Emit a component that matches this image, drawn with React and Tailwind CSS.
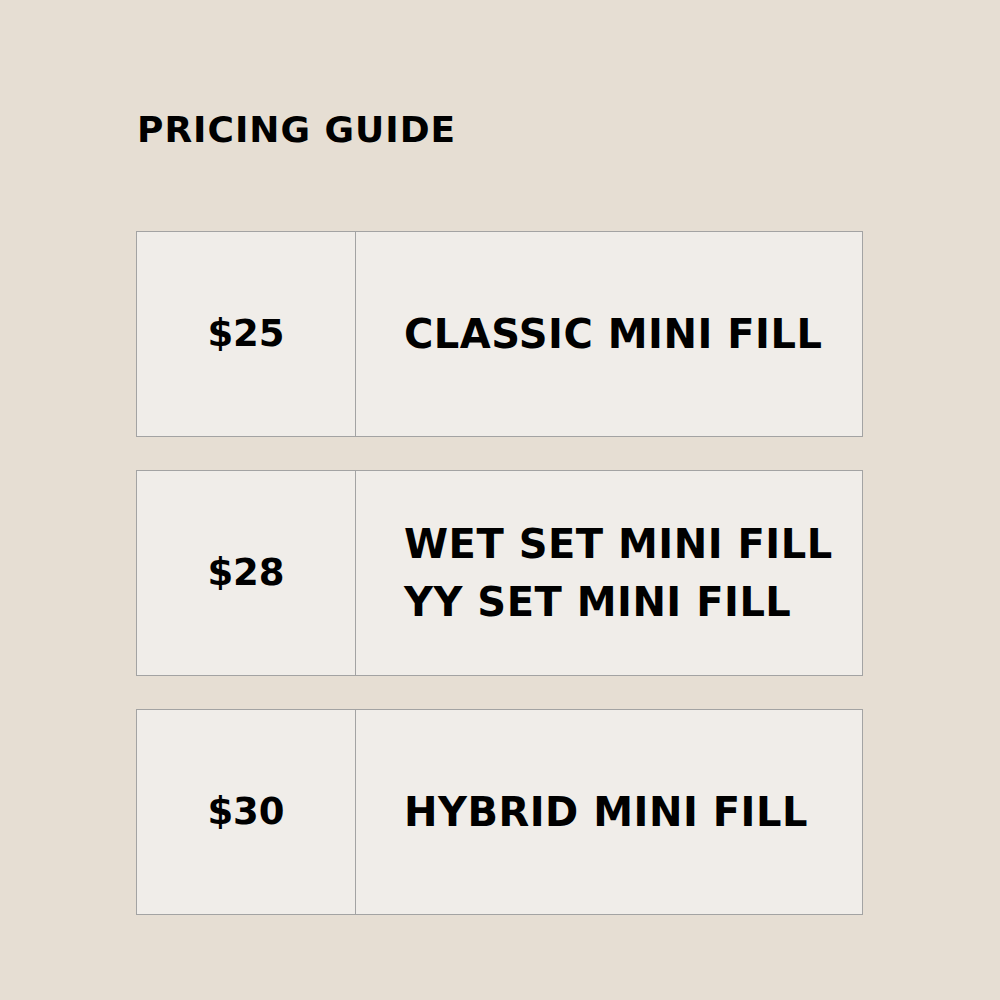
export default function App() {
  const rows = [
    { price: "$25", items: ["CLASSIC MINI FILL"] },
    { price: "$28", items: ["WET SET MINI FILL", "YY SET MINI FILL"] },
    { price: "$30", items: ["HYBRID MINI FILL"] },
  ];
  return (
    <div
      className="w-[1000px] h-[1000px] bg-[#e6ded3] text-black pl-[136px] pt-[110px]"
      style={{ fontFamily: "'DejaVu Sans', 'Liberation Sans', sans-serif" }}
    >
      <h1 className="text-[36px] leading-[40px] font-bold tracking-[1px] pl-[1px]">
        PRICING GUIDE
      </h1>
      <div className="flex flex-col gap-[33px] mt-[81px]">
        {rows.map((row) => (
          <div
            key={row.price}
            className="flex w-[727px] h-[206px] bg-[#f0ede9] border border-[#a3a3a3]"
          >
            <div className="w-[219px] flex items-center justify-center border-r border-[#a3a3a3] text-[37px] font-bold">
              {row.price}
            </div>
            <div className="flex-1 flex flex-col justify-center pl-[48px] text-[40px] leading-[58px] font-bold tracking-[0.5px]">
              {row.items.map((item) => (
                <div key={item}>{item}</div>
              ))}
            </div>
          </div>
        ))}
      </div>
    </div>
  );
}
